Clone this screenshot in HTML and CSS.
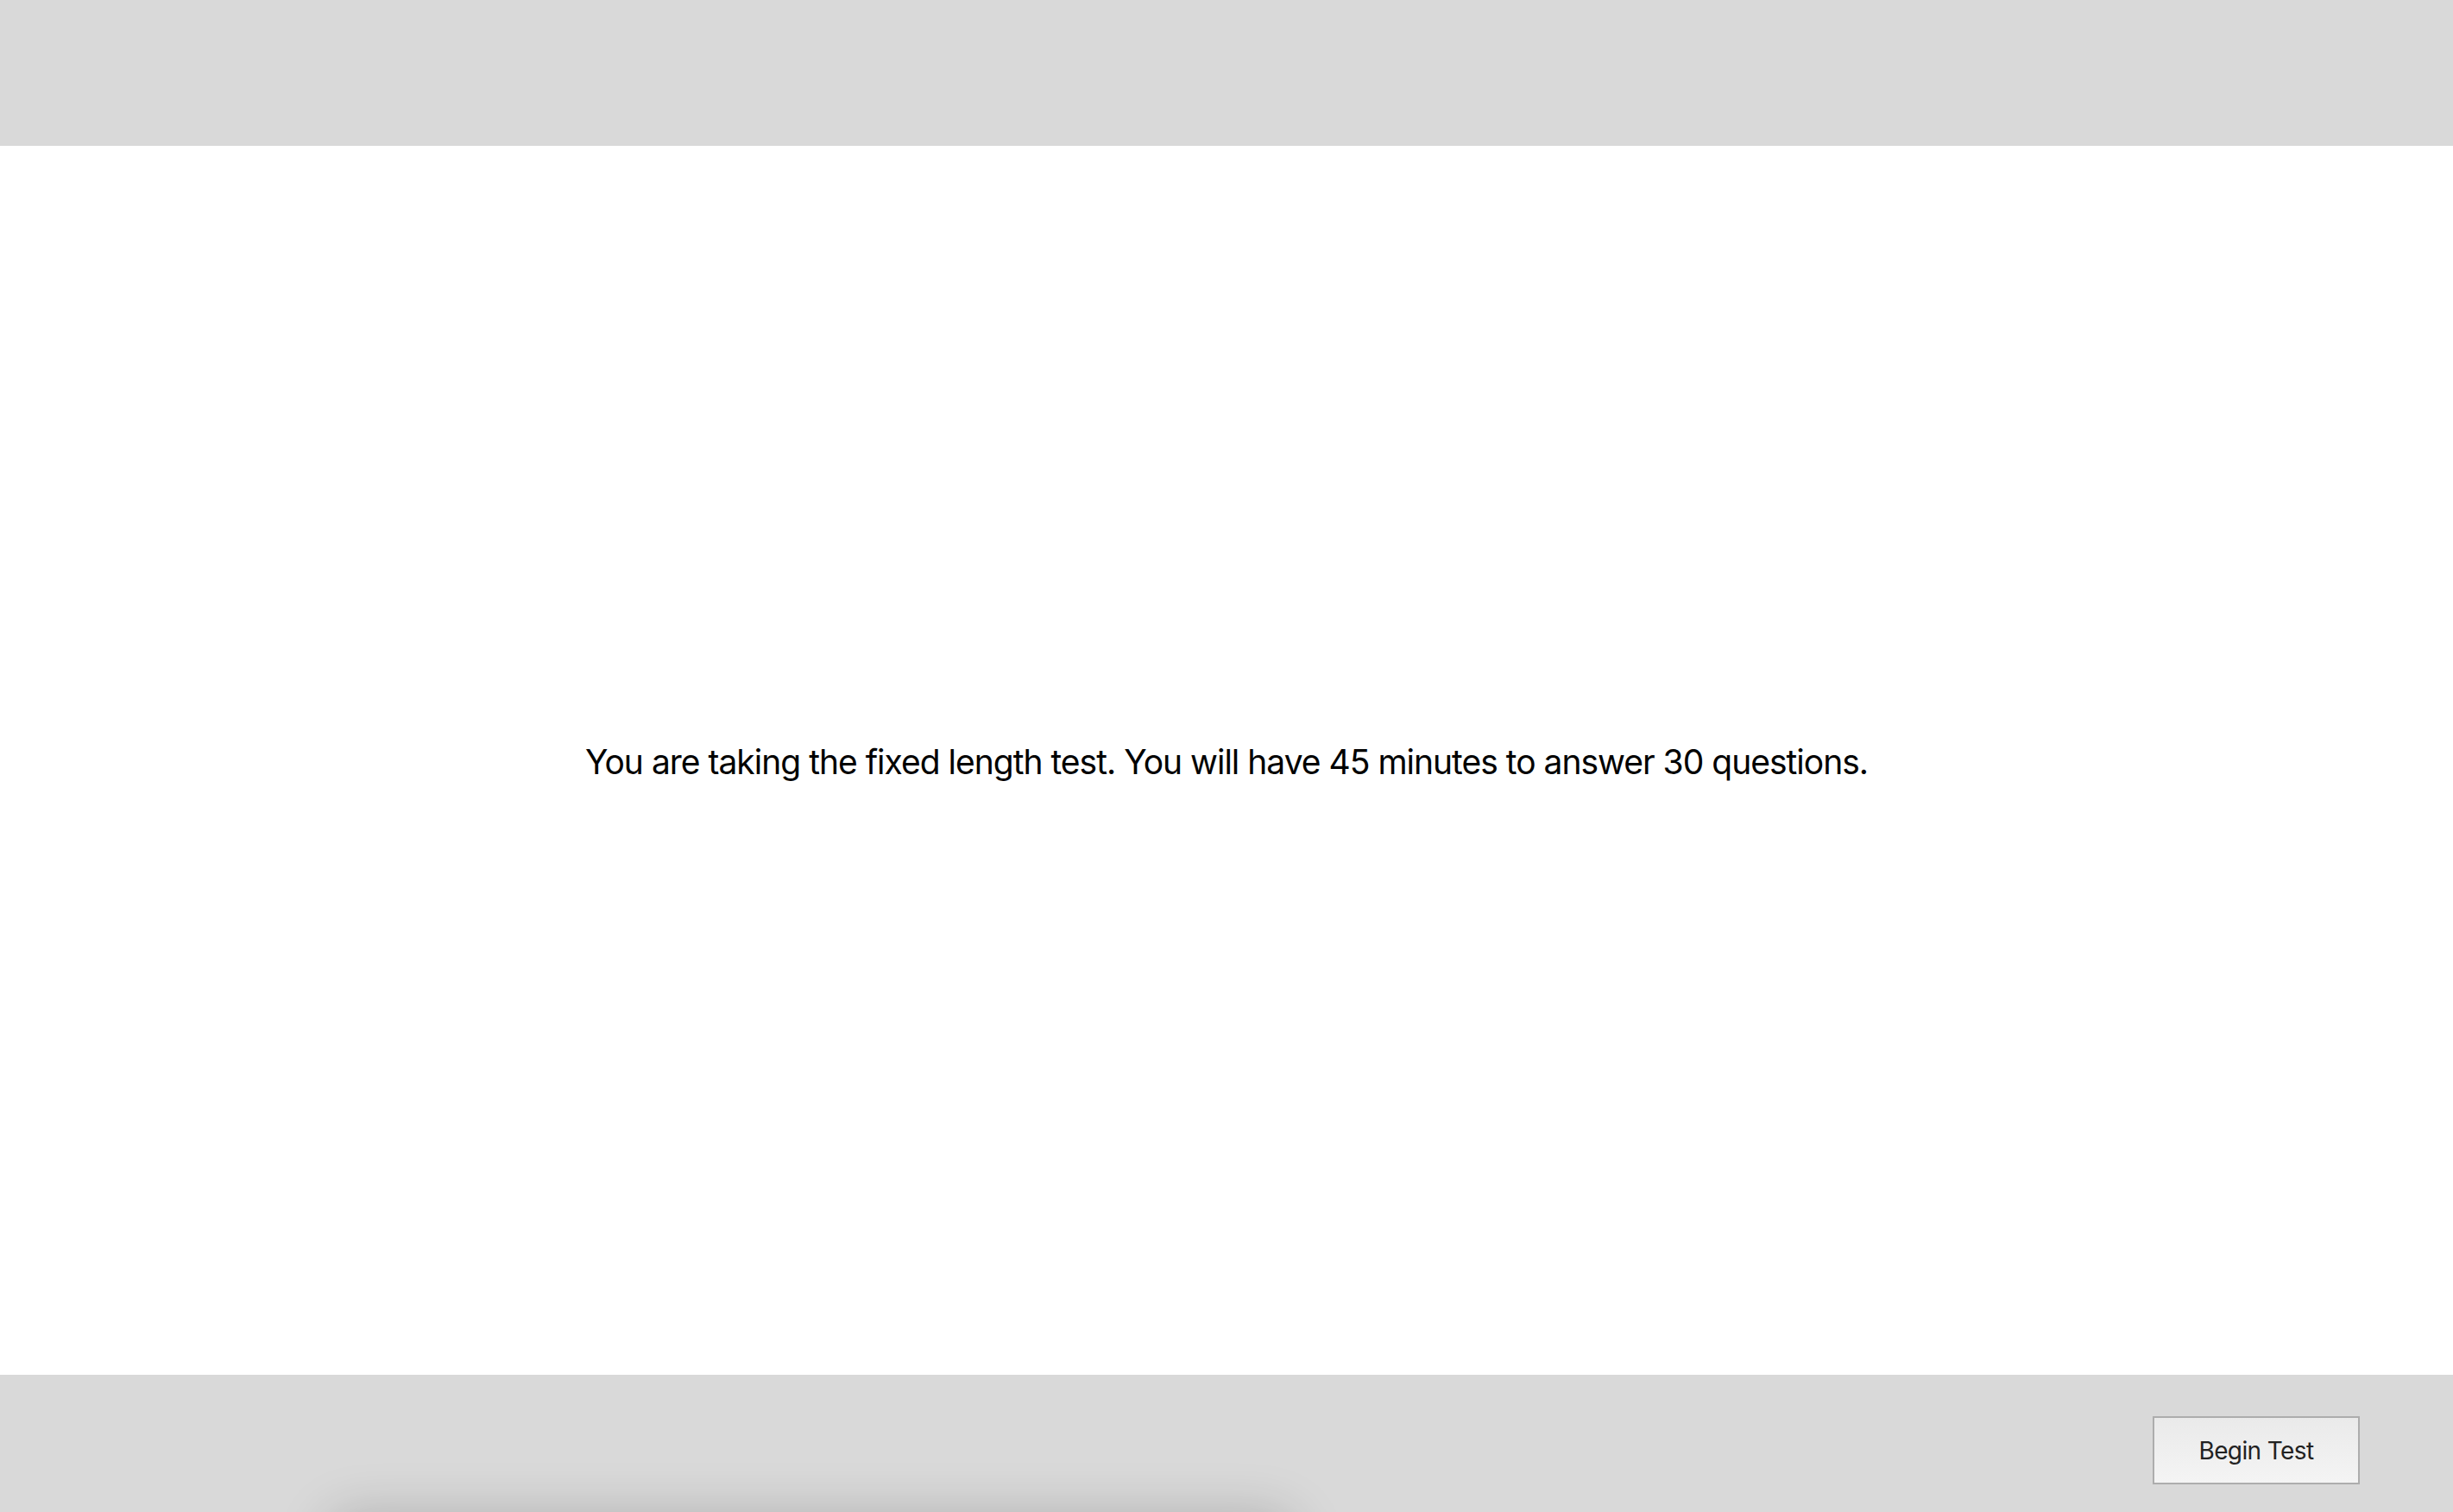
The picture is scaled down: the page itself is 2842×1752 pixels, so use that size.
FILE: index.html
```html
<!DOCTYPE html>
<html lang="en">
<head>
<meta charset="utf-8">
<title>Fixed Length Test</title>
<link rel="stylesheet" href="styles.css">
</head>
<body>
<div class="page">
  <header class="topbar"></header>
  <main class="content">
    <p class="intro">You are taking the fixed length test. You will have 45 minutes to answer 30 questions.</p>
  </main>
  <footer class="bottombar">
    <button class="begin-btn" type="button">Begin Test</button>
    <div class="drawer-shadow"></div>
  </footer>
</div>
</body>
</html>
```

FILE: styles.css
```css
html, body {
  margin: 0;
  padding: 0;
  height: 100%;
  overflow: hidden;
}
body {
  font-family: Inter, "Liberation Sans", Arial, sans-serif;
  background: #ffffff;
  color: #000;
}
.page {
  display: flex;
  flex-direction: column;
  height: 100vh;
}
.topbar {
  height: 169px;
  background: #d9d9d9;
  flex: none;
}
.content {
  flex: 1;
  display: flex;
  align-items: center;
  justify-content: center;
  padding-top: 2px;
}
.intro {
  margin: 0;
  font-size: 39px;
  letter-spacing: -1px;
  color: #000;
}
.bottombar {
  position: relative;
  flex: none;
  height: 159px;
  background: #d9d9d9;
  display: flex;
  justify-content: flex-end;
  align-items: flex-start;
  padding: 48px 108px 0 0;
  box-sizing: border-box;
  overflow: hidden;
}
.begin-btn {
  width: 240px;
  height: 79px;
  border: 2px solid #adadad;
  background: linear-gradient(#eaeaea, #f4f4f4);
  font-family: Inter, "Liberation Sans", Arial, sans-serif;
  font-size: 28px;
  letter-spacing: -0.6px;
  color: #222;
  padding: 0;
  cursor: pointer;
}
.drawer-shadow {
  position: absolute;
  left: 390px;
  width: 1100px;
  top: 172px;
  height: 100px;
  border-radius: 20px;
  background: #d9d9d9;
  box-shadow: 0 0 60px 12px rgba(0, 0, 0, 0.18);
}
```
